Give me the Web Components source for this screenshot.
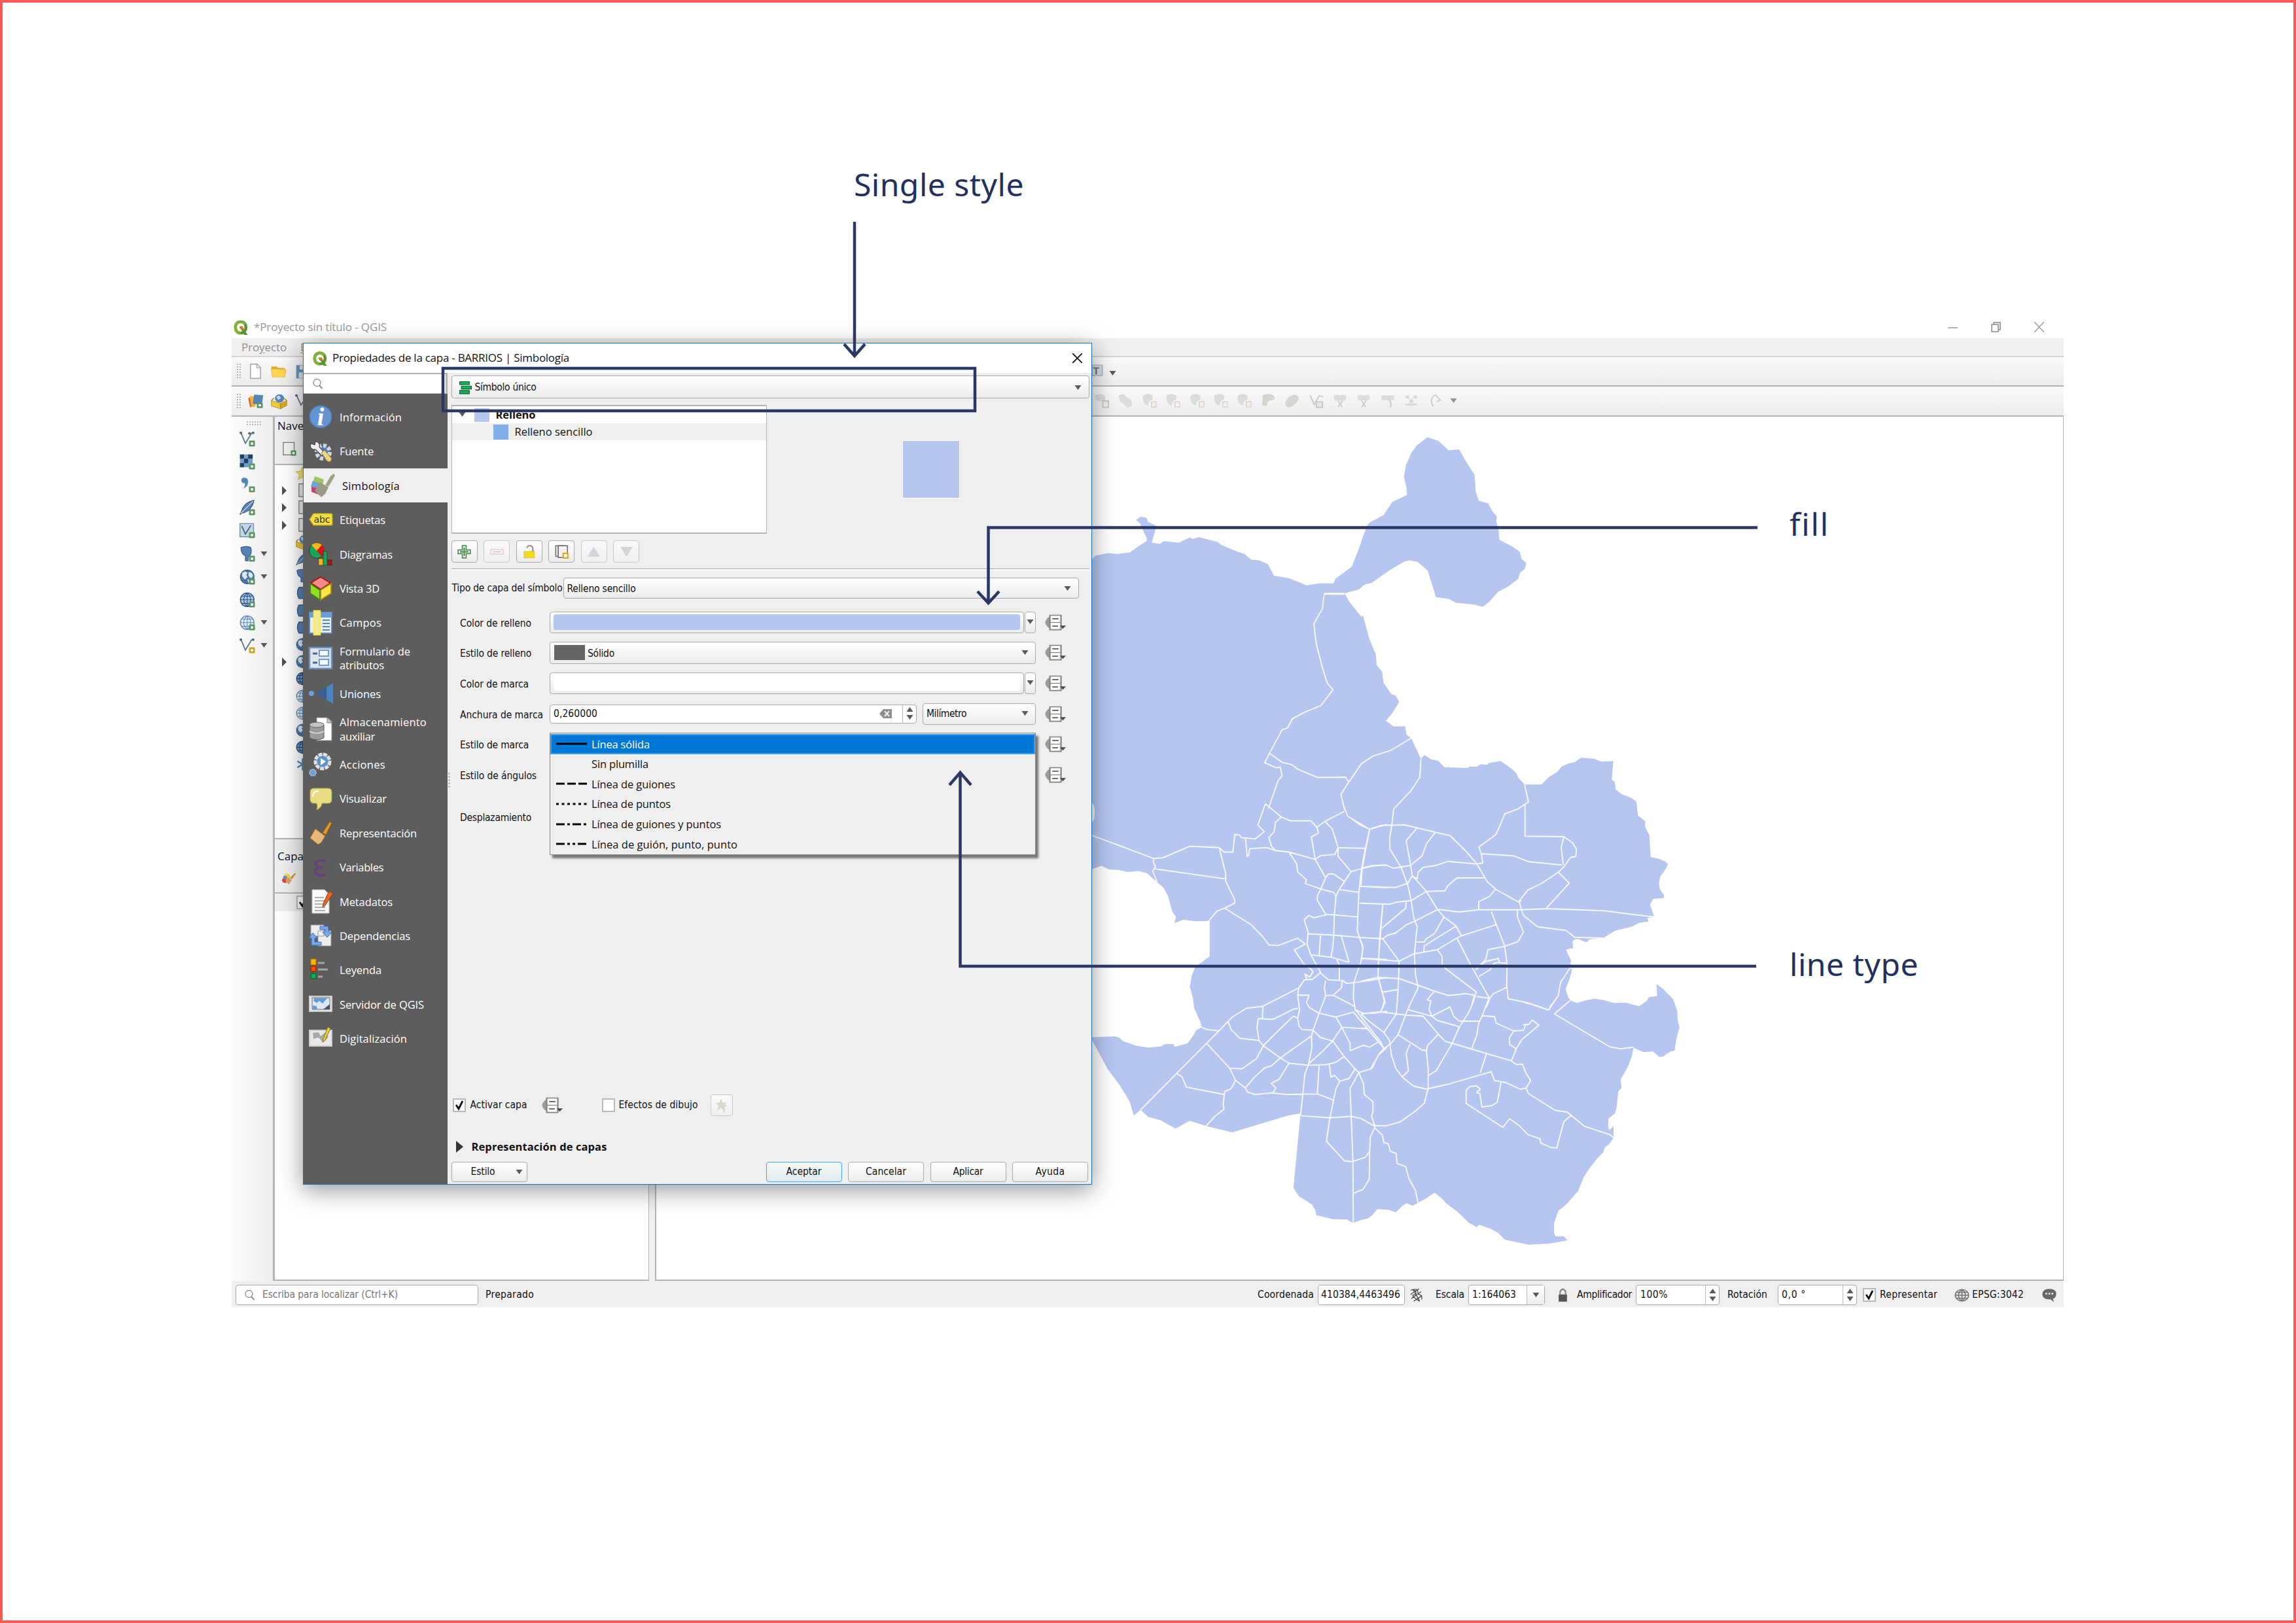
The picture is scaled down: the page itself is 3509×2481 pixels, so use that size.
<!DOCTYPE html>
<html lang="es">
<head>
<meta charset="utf-8">
<title>Propiedades de la capa</title>
<style>
html,body{margin:0;padding:0;background:#fff}
body{width:3509px;height:2481px;overflow:hidden}
</style>
</head>
<body>
<qgis-sheet></qgis-sheet>
<script>
const define = (name, css, html) => customElements.define(name, class extends HTMLElement {
  connectedCallback() {
    if (this.shadowRoot) return;
    const root = this.attachShadow({ mode: 'open' });
    root.innerHTML = `<style>*{box-sizing:border-box}${css}</style>` + (typeof html === 'function' ? html(this) : html);
  }
});

/* Text run; w sets the advance width by spreading letter spacing. */
const FONTS = {
  ui: '"DejaVu Sans Condensed","DejaVu Sans",sans-serif',
  seg: '"Open Sans","Noto Sans",sans-serif',
  note: '"Noto Sans","Open Sans",sans-serif'
};
const ctx = document.createElement('canvas').getContext('2d');
customElements.define('q-text', class extends HTMLElement {
  connectedCallback() {
    if (this.shadowRoot) return;
    const fam = FONTS[this.getAttribute('f') || 'ui'];
    const size = this.getAttribute('s') || (this.getAttribute('f') ? 17 : 15.5);
    const wt = this.hasAttribute('b') ? 700 : 400;
    const w = +this.getAttribute('w');
    const txt = this.textContent;
    ctx.font = `${wt} ${size}px ${fam}`;
    const ls = w ? (w - ctx.measureText(txt).width) / txt.length : 0;
    this.attachShadow({ mode: 'open' }).innerHTML =
      `<style>:host{display:block;flex:none;white-space:nowrap;font:${wt} ${size}px/1.3 ${fam};letter-spacing:${ls.toFixed(3)}px}</style><slot></slot>`;
  }
});

const plus = '<rect x="21" y="21" width="13" height="13" rx="2" fill="#5b9560"/><rect x="25" y="25" width="5" height="5" fill="#fff"/>';
const plusY = plus.replace('#5b9560', '#c9a61c');
const globe = (c, d) => `<circle cx="17" cy="17" r="15" fill="${c}" stroke="${d}" stroke-width="2"/><path d="M2 17h30M17 2v30M5 9h24M5 25h24M17 2c-10 8-10 22 0 30M17 2c10 8 10 22 0 30" stroke="${d}" fill="none" stroke-width="1.6"/>`;
const land = '<path d="M6 8l7-3 5 3-3 5 3 4-6 6-6-7zM20 6l8 3 2 7-5 4-5-5zM17 23l7 1-4 7z" fill="#dbe7f2"/>';
const ICONS = {
  logo: '<path d="M17 1C7 1 1 8 1 18s6 17 16 17c3 0 5-.6 7-1.500l2 2.500h8l-5-7c3-3 4-7 4-11C33 8 27 1 17 1zm0 7c6 0 9 4 9 10 0 2-.4 4-1 5l-5-6h-7l8 10c-1 1-2.500 1-4 1-6 0-9-4-9-10S11 8 17 8z" fill="#589632"/><path d="M17 1C7 1 1 8 1 18s6 17 16 17l-1-7c-5 0-8-4-8-10S11 8 17 8c4 0 6 1 8 4l5-5C27 3 23 1 17 1z" fill="#7fb336"/><path d="M14 15h7l5 8-4 1z" fill="#ee7913"/>',
  search: '<circle cx="15" cy="14" r="11" fill="none" stroke="#8a8a8a" stroke-width="2.600"/><path d="M22 22l9 10" stroke="#8a8a8a" stroke-width="4"/>',
  info: '<circle cx="18" cy="18" r="17" fill="#6495d0" stroke="#4a79b5" stroke-width="1.500"/><text x="18" y="31" font-family="Liberation Serif,serif" font-style="italic" font-weight="700" font-size="38" text-anchor="middle" fill="#fff">i</text>',
  source: '<circle cx="22" cy="19" r="10" fill="#4f80b8" stroke="#d6d6d6" stroke-width="6" stroke-dasharray="5 2.800"/><path d="M3 6l6 2 1-5c5 0 7 4 6 8l8 9-4 5-10-10c-5 1-9-2-7-9z" fill="#eee" stroke="#444" stroke-width="1.200"/><path d="M19 20l5-4 11 13-2 5-5-1z" fill="#ecd581" stroke="#8d7a35"/>',
  symb: '<path d="M9 4l14 5-3 11L6 15z" fill="#9ec45c"/><path d="M6 11l10 4-2 9-11-4z" fill="#6fa3dd"/><path d="M4 20l12 3-1 9-11-4z" fill="#c2476a"/><path d="M17 13l13 8-5 10-6 5-10-10z" fill="#9a9a86"/><path d="M25 18L33 4l5-4 2 3-10 17z" fill="#a3a182"/>',
  abc: '<path d="M1 18l6-9h27q2 0 2 2v14q0 2-2 2H7z" fill="#f3dc3c" stroke="#bda21e" stroke-width="1.200"/><text x="20" y="23" font-family="DejaVu Sans,sans-serif" font-size="14" text-anchor="middle" fill="#333">abc</text>',
  diag: '<circle cx="12" cy="13" r="11.500" fill="#18a558" stroke="#333"/><path d="M12 13L4 4q8-6 16 0z" fill="#fbb516"/><path d="M12 13l8-9q7 9 0 18z" fill="#d31717"/><path d="M15 25h7v10h-7z" fill="#fbb516" stroke="#333" stroke-width=".6"/><path d="M22 14h6v21h-6z" fill="#18a558" stroke="#222" stroke-width=".6"/><path d="M29 27h6v8h-6z" fill="#b31212" stroke="#222" stroke-width=".6"/>',
  cube: '<path d="M18 1l15 9-15 10L3 10z" fill="#f58c8c" stroke="#a51616" stroke-width="2"/><path d="M2 11l15 10v15L2 26z" fill="#8ce01c" stroke="#4a7a10" stroke-width="2"/><path d="M34 11L18 21v15l16-10z" fill="#ffe548" stroke="#a58c14" stroke-width="2"/>',
  fields: '<path d="M1 2h34v32H1z" fill="#e8edf2" stroke="#5c86b8" stroke-width="2"/><path d="M1 2h34v8H1z" fill="#6f9ccf"/><path d="M21 14h11M21 19h11M21 24h11M21 29h11" stroke="#5c86b8" stroke-width="2"/><path d="M8 0h9v36H8z" fill="#f2e9a0" stroke="#f9f04f" stroke-width="2.500"/>',
  form: '<path d="M1 2h34v32H1z" fill="#dfe5ea" stroke="#6f93bd" stroke-width="2.500"/><path d="M16 6h14v9H16zM16 20h14v9H16z" fill="#fff" stroke="#6f9ccf" stroke-width="2"/><path d="M6 11h7M6 25h7" stroke="#47688f" stroke-width="3"/>',
  join: '<path d="M37 2v32L11 18z" fill="#4f83bd"/><path d="M11 18l16-10v20z" fill="#35608f"/><circle cx="4" cy="18" r="4" fill="#6aa0dc"/>',
  aux: '<path d="M12 1h17l6 6v29H12z" fill="#fff" stroke="#8b8b8b"/><path d="M28 1l7 8h-7z" fill="#ccc" stroke="#777"/><path d="M1 12v20q10 6 22 0V12z" fill="#9b9b9b" stroke="#555"/><ellipse cx="12" cy="12" rx="11" ry="4" fill="#c4c4c4" stroke="#666"/><path d="M1 22q11 6 22 0" fill="none" stroke="#ddd" stroke-width="1.500"/>',
  action: '<circle cx="21" cy="14" r="11" fill="#5e92cd" stroke="#e2e2e2" stroke-width="5" stroke-dasharray="6 1.500"/><path d="M18 9l8 5-8 6z" fill="#fff"/><circle cx="6" cy="31" r="5" fill="#6aa0dc" stroke="#d0d0d0" stroke-width="1.500" stroke-dasharray="2 1"/>',
  tip: '<path d="M8 2h21q6 0 6 6v11q0 6-6 6H20q0 6-8 10 2-5 0-10H8q-6 0-6-6V8q0-6 6-6z" fill="#e6dc84" stroke="#b5a941"/><path d="M6 15q0-9 9-9" fill="none" stroke="#fff" stroke-width="2"/>',
  brush: '<path d="M21 18L32 1l3 2-9 18z" fill="#e39a2d" stroke="#9a5f10"/><path d="M10 12l15 11-6 10-5 3L2 26z" fill="#e8b877" stroke="#9e7030"/>',
  eps: '<text x="17" y="32" font-family="DejaVu Sans,sans-serif" font-size="46" text-anchor="middle" fill="#67407a">ε</text>',
  meta: '<path d="M5 0h19l7 7v29H5z" fill="#fafafa" stroke="#bbb"/><path d="M9 12h14M9 17h16M9 22h12M9 27h16M9 32h16" stroke="#999" stroke-width="1.600"/><path d="M31 2l6 4-12 18-4 3 1-6z" fill="#e16a28" stroke="#8f3f12"/>',
  dep: '<path d="M3 2h20v17H3zM14 11h20v23H14z" fill="#eee" stroke="#999"/><path d="M17 4h13v9h5l-7 8-7-8h4V9h-8z" fill="#7da7e8" stroke="#3f6fbb"/><path d="M19 33H4V22H0l6-8 7 8H9v6h10z" fill="#7da7e8" stroke="#3f6fbb"/>',
  legend: '<path d="M3 1h8v9H3z" fill="#ffb400" stroke="#b57400"/><path d="M3 12h8v8H3z" fill="#ff4b00" stroke="#8c1a00"/><path d="M3 23h8v8H3z" fill="#0bb04c" stroke="#04542a"/><path d="M14 7h10M14 17h15M14 28h7" stroke="#a5a5a5" stroke-width="3"/>',
  server: '<path d="M1 6h34v23H1z" fill="#eee" stroke="#ccc" stroke-width="2"/><path d="M5 8h27v18H5z" fill="#dce9f5" stroke="#666"/><path d="M8 9h20l-7 8-5-4-4 3-5-3zM6 20l6 1 1 5H6z" fill="#649ad4"/><path d="M32 18v8H22z" fill="#555"/>',
  digit: '<path d="M1 6h34v24H1z" fill="#e9e9e9" stroke="#ccc" stroke-width="2"/><path d="M6 10l9-1 3 6 7-6 5 7-8 9-7-8-8 2z" fill="#a9a9a9"/><path d="M29 1l4 2-8 18-4 3 1-5z" fill="#e3d13c" stroke="#877a1a"/>',
  doc: '<path d="M6 1h16l8 8v26H6z" fill="#fff" stroke="#aaa" stroke-width="2.500"/><path d="M21 1v9h9" fill="#eee" stroke="#aaa" stroke-width="2"/>',
  folder: '<path d="M1 4h12l4 4h15v6H1z" fill="#e0a92c"/><path d="M1 11h26l8 2-3 20H3z" fill="#ffd54f" stroke="#d9a52a"/>',
  save: '<path d="M1 2h34v33H1z" fill="#6b93bf"/><path d="M9 3h18v10H9zM7 20h22v14H7z" fill="#dde6ef"/>',
  layers: '<path d="M2 10l14-3-1 20-9 5z" fill="#e05a2a"/><path d="M5 6l14 0-1 24-9 2z" fill="#f0b23a"/><path d="M15 2l20 1-3 23-20-2z" fill="#5683b5"/>' + plus,
  pack: '<circle cx="19" cy="11" r="10" fill="#5683b5"/><path d="M12 7l6-3 4 6-6 5z" fill="#c8dcf0"/><path d="M1 16l20 7v13L1 29z" fill="#f0c83a" stroke="#9a7a14"/><path d="M21 23l14-7v12l-14 8z" fill="#d9a91e" stroke="#9a7a14"/><path d="M1 16l6-6M35 16l-6-5" stroke="#9a7a14" stroke-width="2"/>',
  vec: '<path d="M3 3l10 24L27 4" fill="none" stroke="#5d7386" stroke-width="2.500"/><circle cx="3" cy="4" r="3" fill="#4d6a85"/><circle cx="22" cy="5" r="3" fill="#4d6a85"/><circle cx="30" cy="4" r="3" fill="#4d6a85"/>' + plus,
  vecy: '<path d="M3 3l10 24L27 4" fill="none" stroke="#5d7386" stroke-width="2.500"/><circle cx="3" cy="4" r="3" fill="#4d6a85"/><circle cx="30" cy="4" r="3" fill="#4d6a85"/>' + plusY,
  raster: '<path d="M1 1h28v28H1z" fill="#6f9ccf"/><path d="M1 1h9v9H1zM19 1h10v9H19zM10 10h9v10h-9zM1 20h9v9H1z" fill="#23405e"/>' + plus,
  comma: '<path d="M8 2q11-2 11 9 0 10-11 15 5-6 4-12-8 0-8-6 0-5 4-6z" fill="#5683b5"/>' + plus,
  feather: '<path d="M32 1Q10 6 5 24L1 33l3-3q18-4 22-14 4-5 6-15z" fill="#5683b5" stroke="#2f4d6b" stroke-width="1.500"/><path d="M30 3L3 30" stroke="#dfe9f3" stroke-width="1.500"/>' + plus,
  vbox: '<path d="M1 2h30v29H1z" fill="#c4d4e4" stroke="#6f8ca8" stroke-width="2"/><path d="M5 7l8 18L25 6" fill="none" stroke="#44607a" stroke-width="2.500"/>' + plus,
  eleph: '<path d="M3 3q12-5 22 0 3 10-2 18l-4 2v9h-6V20q-9 0-10-17z" fill="#5683b5" stroke="#2f5078" stroke-width="1.500"/>' + plus,
  globe1: globe('#5683b5', '#3a6490') + land + plus,
  globe2: globe('#a9c8e8', '#2f5078') + plus,
  globe3: globe('#e4eef8', '#6089b3') + plus,
  g1: globe('#5683b5', '#3a6490') + land, g2: globe('#6f9ccf', '#23405e'), g3: globe('#e4eef8', '#6089b3'),
  star: '<path d="M17 1l5 11 12 1-9 8 3 12-11-6-11 6 3-12-9-8 12-1z" fill="#f4e36b" stroke="#c9a61c"/>',
  drive: '<path d="M8 1h28v32H8z" fill="#eee" stroke="#777" stroke-width="2"/>',
  db: '<path d="M8 3h26v28H8q-8-14 0-28z" fill="#5683b5" stroke="#2f5078" stroke-width="2"/>',
  snow: '<path d="M17 2v30M4 9l26 16M30 9L4 25" stroke="#5683b5" stroke-width="4"/>',
  nlayer: '<path d="M3 2h26v30H3z" fill="#f2f2ee" stroke="#777" stroke-width="2"/>' + plus,
  style: '<circle cx="12" cy="12" r="9" fill="#f2d64b"/><circle cx="8" cy="22" r="8" fill="#e0443c"/><circle cx="8" cy="14" r="5" fill="#5a92d6"/><path d="M19 16L32 1l3 2-10 16z" fill="#d99a3d"/><path d="M12 13l13 9-8 12-8-9z" fill="#d9a565"/>',
  single: '<path d="M1 1h28v8H1zM6 13h29v8H6zM1 25h28v9H1z" fill="#0eb657" stroke="#0a5c30" stroke-width="2"/>',
  add: '<path d="M13 2h10v11h11v10H23v11H13V23H2V13h11z" fill="#fff" stroke="#4d8d53" stroke-width="3"/><path d="M18 7v22M7 18h22" stroke="#5b9560" stroke-width="4"/>',
  minus: '<path d="M2 12h32v12H2z" fill="#fff" stroke="#e0cdd0" stroke-width="2.500"/><path d="M7 18h22" stroke="#e4cdd0" stroke-width="4"/>',
  lock: '<path d="M5 17h27v17H5z" fill="#f2dc1e" stroke="#c5ab16"/><path d="M12 8q2-6 9-6 7 1 7 8v7" fill="none" stroke="#9b9b9b" stroke-width="4"/>',
  dup: '<path d="M2 2h22v28H2z" fill="#ddd" stroke="#777" stroke-width="2.500"/><path d="M9 2h24v31H9z" fill="#f1f1f1" stroke="#666" stroke-width="2.500"/><path d="M22 22h12v12H22z" fill="#fff" stroke="#d4b02a" stroke-width="4"/>',
  up: '<path d="M18 3l15 30H3z" fill="#d3d6d9" stroke="#c2c6ca"/>',
  down: '<path d="M18 33L33 3H3z" fill="#d3d6d9" stroke="#c2c6ca"/>',
  fx: '<path d="M17 2l4 10h11l-9 7 4 13-10-8-10 8 4-13-9-7h11z" fill="#dbd8ca"/><path d="M25 34V22q0-4 6-3" fill="none" stroke="#cfcfcf" stroke-width="3"/>',
  dd: '<path d="M8 5v26Q1 26 .5 18 1 10 8 5z" fill="#9c9c9c"/><path d="M8 2h18v32H8z" fill="#f9f9f7" stroke="#83837b" stroke-width="2.200"/><path d="M8 18h18" stroke="#83837b" stroke-width="1.600"/><path d="M12 10h10M12 26h9" stroke="#5c5c5c" stroke-width="2.600"/><path d="M24 25h10l-5 7z" fill="#4c4c4c"/>',
  tbox: '<path d="M0 2h20v26H0z" fill="#d5e0e4" stroke="#a9b4ba" stroke-width="2"/><path d="M2 9h12M8 9v16" stroke="#777" stroke-width="3"/>',
  plug: '<path d="M4 6q8-6 12 2t-4 9 4 9 10 6M14 3q8-1 8 6t6 8 4 12M3 16l22-14M5 26L31 9M11 33l22-14M9 3l18 30" fill="none" stroke="#3d3d3d" stroke-width="2"/>',
  padlock: '<path d="M6 16h24v18H6z" fill="#555"/><path d="M10 17V9q8-12 16 0v8" fill="none" stroke="#888" stroke-width="4"/>',
  world: '<circle cx="18" cy="18" r="16" fill="#e6e6e6" stroke="#777" stroke-width="2.500"/><path d="M2 18h32M18 2v32M5 10h26M5 26h26M18 2C7 10 7 26 18 34M18 2c11 8 11 24 0 32" fill="none" stroke="#777" stroke-width="2.500"/>',
  bubble: '<path d="M18 2q16 0 16 13-1 10-8 12l3 8-9-7Q2 29 2 15 3 2 18 2z" fill="#666"/><path d="M9 14h4M16 14h4M23 14h4" stroke="#eee" stroke-width="4"/>',
  d0: '<path d="M3 5q14-8 22 1v11H14q-12 2-11-12z" fill="#dadedb" stroke="#cdd1ce"/><path d="M20 18h13v16H20z" fill="#eceee8" stroke="#c6cac2" stroke-width="3"/>',
  d1: '<path d="M4 4q10-6 15 4 16 6 13 22-12 8-18-6Q0 16 4 4z" fill="#dadfdd" stroke="#cdd1ce"/>',
  d2: '<path d="M3 5q14-8 22 1l-2 9q-8 0-9 14-12-4-11-24z" fill="#dadeda" stroke="#cdd1ce"/><path d="M22 20h11v13H22z" fill="#f3efec" stroke="#d5cfc6" stroke-width="2"/>',
  d3: '<path d="M5 4q14-6 24 1 6 12-8 10-6 2-8 14-8 2-9-4z" fill="#d3d7cf" stroke="#c6cac2"/>',
  d4: '<path d="M24 3q12 4 6 14-8 14-20 16-10-2-6-14Q10 4 24 3z" fill="#d3d7cf" stroke="#c6cac2"/>',
  d5: '<path d="M3 3l10 24L24 5l9 2" fill="none" stroke="#c6cfcd" stroke-width="3"/><path d="M18 20h14v14H18z" fill="#e6e8e6" stroke="#bbb" stroke-width="2"/>',
  d6: '<path d="M4 4q7-3 14 0 7-3 14 0v10q-7 6-14 2-7 4-14-2z" fill="#d9dddb"/><path d="M14 18l9 15M23 18l-9 15" stroke="#cdc6c8" stroke-width="2.500"/>',
  d7: '<path d="M3 4h30v12H3z" fill="#d9dddb"/><path d="M20 14q8 8 4 20" fill="none" stroke="#ccc" stroke-width="3"/>',
  d8: '<path d="M5 4h8v8H5zM23 4h8v8h-8zM14 14h8v8h-8zM5 24h26v5H5z" fill="#d5d8d5"/>',
  d9: '<path d="M20 2q-16 8-6 30M20 4l10 12-8 4" fill="none" stroke="#ccc" stroke-width="3"/>'
};
customElements.define('q-icon', class extends HTMLElement {
  connectedCallback() {
    if (this.shadowRoot) return;
    const w = this.getAttribute('w') || 24, h = this.getAttribute('h') || w;
    this.attachShadow({ mode: 'open' }).innerHTML =
      `<style>:host{display:block;flex:none;width:${w}px;height:${h}px}svg{display:block;overflow:visible}</style>
       <svg width="${w}" height="${h}" viewBox="0 0 36 36" preserveAspectRatio="none">${ICONS[this.getAttribute('n')] || ''}</svg>`;
  }
});
define('q-arrow', ':host{display:block;flex:none;width:11px;height:8px}svg{display:block}',
  el => el.hasAttribute('right')
    ? '<svg width="10" height="14"><path d="M1 0l7 7-7 7z" fill="#505050"/></svg>'
    : `<svg width="11" height="8"><path d="${el.hasAttribute('up') ? 'M.5 7h10L5.500 0z' : 'M.5 0h10L5.500 7z'}" fill="#5a5a5a"/></svg>`);

/* Framed control: combo, button or field */
define('q-box', `:host{display:flex;flex:none;align-items:center;border:1.500px solid #aaa;border-radius:4px;background:linear-gradient(#fff,#ececec)}
 :host([field]){background:#fff}
 :host([def]){border-color:#3fa2f2;background:linear-gradient(#f7fafc,#e2eaf0)}
 :host([off]){border-color:#c9c9c9;background:linear-gradient(#fafafa,#efefef)}
 :host([mid]){justify-content:center}`, '<slot></slot>');
define('q-check', ':host{display:block;flex:none;width:20px;height:21px;border:2px solid #b8b8b8;background:#fff}svg{display:block}',
  el => el.hasAttribute('on') ? '<svg width="16" height="17"><path d="M3 8l4 6 6-12" fill="none" stroke="#111" stroke-width="2.800"/></svg>' : '');
define('q-spin', ':host{display:flex;flex-direction:column;gap:4px;justify-content:center;align-items:center;width:21px;height:100%;border-left:1px solid #bbb;margin-left:auto}',
  '<q-arrow up></q-arrow><q-arrow></q-arrow>');
define('q-grip', ':host{display:block;flex:none;width:7px;height:25px;background:radial-gradient(#b5b5b5 1px,transparent 1.300px) 0 0/4px 4px}', '');

/* District map. Each survey sheet has its own origin and scale. */
const SHEETS = { a: [1660, 640, 760 / 1568, 660 / 1568], b: [1660, 1240, 1 / 3, 700 / 1568], c: [2080, 1140, 1 / 3, 1 / 3], d: [2080, 1500, 1 / 3, 1 / 3] };
const MX = 1003, MY = 637;
const pts = (k, s) => s.trim().split(/\s+/).map(p => {
  const [x, y] = p.split(',').map(Number), [ox, oy, sx, sy] = SHEETS[k];
  return (ox + x * sx - MX).toFixed(1) + ' ' + (oy + y * sy - MY).toFixed(1);
}).join('L');
const OUTLINE = [
['a','18,510 30,497 70,488 95,491 138,486 165,463 192,443 190,432 175,395 170,380 157,368 172,356 190,360 195,374 222,390 207,450 233,455 245,445 292,450 327,431 337,437 355,430 415,448 425,458 470,480 500,492 520,512 545,514 573,528 592,570 640,580 695,605 735,598 780,598 785,582 838,537 862,465 872,430 885,390 893,378 938,350 965,303 1012,277 1010,250 1002,210 1008,170 1025,125 1043,97 1076,68 1110,80 1143,115 1176,112 1200,160 1225,205 1228,265 1238,298 1268,308 1280,335 1295,355 1293,375 1300,400 1303,440 1345,465 1368,485 1372,508 1388,525 1383,545 1368,560 1362,582 1330,610 1300,628 1268,668 1250,683 1220,675 1165,668 1145,655 1103,648 1090,600 1077,552 1045,520 1020,514 1005,518 960,548 900,596 878,602 860,620 815,634 830,665 868,720 873,715 893,800 913,855 916,895 933,918 938,960 962,1000 975,1005 987,1028 965,1070 945,1097 970,1118 1006,1117 1010,1148 1025,1160 1045,1210'],
['c','275,60 290,43 322,62 355,70 382,98 487,102 500,95 530,96 550,85 575,88 590,78 640,70 690,105 712,125 720,145 750,178 828,178 860,145 900,120 920,95 950,82 980,75 1008,55 1070,60 1100,73 1157,70 1150,155 1163,165 1168,200 1195,222 1235,237 1262,255 1270,320 1303,345 1303,372 1322,410 1328,510 1370,520 1395,530 1407,542 1400,560 1372,600 1366,630 1370,658 1390,685 1388,698 1340,702 1325,727 1345,785 1313,790 1318,806 1275,812 1240,830 1165,848 1110,882 1050,887 1033,902 1000,888 985,887 970,895 973,928 940,935 963,985 958,1020 968,1025 958,1065 938,1115 950,1155 962,1167'],
['d','960,87 990,100 1030,88 1070,80 1115,87 1160,100 1215,98 1275,115 1310,90 1320,73 1358,68 1355,13 1385,35 1430,80 1450,135 1452,180 1460,210 1445,270 1438,318 1420,322 1385,345 1368,347 1338,322 1295,325 1250,305 1240,350 1220,400 1190,450 1195,490 1180,505 1172,580 1165,605 1135,630 1133,660 1137,683 1158,665 1158,718 1140,745 1118,762 1110,785 1085,810 1050,855 1022,897 995,962 940,1025 905,1052 885,1110 885,1155 893,1170 930,1170 947,1188 870,1202 768,1208 660,1185 630,1155 600,1138 543,1117 530,1127 495,1108 440,1055 390,1018 370,995 337,970 300,995 237,1030 210,1018 190,1030 160,1060 125,1048 75,1045 55,1070 30,1088 0,1095'],
['b','1223,1410 1195,1398 1130,1397 1055,1383 1050,1365 1035,1347 975,1318 950,1290 983,1035 925,1042 670,1100 550,1078 475,1060 410,1087 340,1058 285,1047 250,1023 218,1042 200,995 155,940 100,885 28,785 0,775 130,771 150,775 170,788 230,803 285,810 345,805 360,798 400,797 405,807 465,795 485,775 505,750 530,740 523,720 495,675 490,640 475,600 485,560 500,535 525,520 566,498 566,372 555,376 500,377 445,372 405,383 412,362 395,345 375,290 355,262 325,243 280,213 240,205 190,208 150,201 105,200 70,187 28,198 0,198']
];
const LINES = {
a: `750,640 745,690 718,745 725,815 745,905 760,960 778,985 740,1042 690,1065 650,1090 635,1123 618,1130 578,1215 563,1250 600,1268 612,1265 618,1297 605,1315 575,1415
578,1215 618,1248 650,1257 665,1272 730,1303 818,1302 828,1320
1025,1160 960,1205 905,1225 868,1253 828,1320 803,1365 815,1420`,
b: `28,83 310,162 350,160 475,120 610,125 632,140 672,140 682,80 705,82 710,90 775,95 817,70 787,48 822,-25
730,90 738,155 745,152 750,128 830,125 870,135 930,140 1050,165
1050,165 1075,152 1140,148 1155,125 1280,127
822,-25 895,20 868,38 862,70 838,90 850,120 868,135
895,20 935,33 1030,33 1058,55 1095,35 1185,0
1183,-14 1200,18 1300,62 1380,45
1058,55 1065,75 1033,88 1050,165 1098,228 1075,268 1060,290 1060,305 1100,355
1095,35 1128,60 1155,125 1155,155 1215,207
1300,62 1280,127 1262,200 1250,280 1243,410 1268,465 1262,510 1228,585 1225,640 1235,685
610,125 640,215 640,240 682,305 680,315 635,332 600,342 566,372
310,162 308,175 318,190 305,205 325,243
310,197 640,232
635,332 755,388 810,430 838,458 880,460 970,435 1005,455
930,140 965,180 970,208 1010,235 1005,248 1075,266 1135,278 1145,292 1138,355 1135,430 1130,470 1122,500
1098,228 1110,215 1135,215 1183,240
1145,292 1160,268 1215,207 1262,197 1320,187 1380,185
1160,268 1250,278
1100,355 1045,365 1020,357 1000,372 1018,415 1013,455 1030,492 1075,552 1040,575 1000,578 975,605
1100,353 1243,362
1018,420 1145,425 1250,432 1365,437
1075,422 1068,495
1030,492 1122,500 1205,517
1170,428 1205,517
1262,503 1380,508
1255,257 1380,262
1253,315 1380,318
1360,318 1345,440 1338,570 1370,655 1350,688
1005,455 955,475 1000,525 1030,540 1040,550 1025,568 1003,558 1012,575
975,605 810,668 735,675 670,705 650,720 605,755 415,898 250,1023
530,740 555,748 605,752
975,605 970,630 978,680 970,710 975,735 990,748 1040,750
970,630 1022,630 1010,655 1022,672 1068,692 1040,750 1033,770 1035,810 1020,865 1003,900 983,1040
1075,555 1112,578 1175,580 1195,590 1300,580 1380,570
1150,508 1162,530 1160,578
1175,580 1170,605 1133,630 1098,632 1092,605 1098,580
1133,630 1235,670
1098,632 1068,692 1145,705 1225,688
1235,680 1270,692 1320,692 1380,685
1235,680 1350,790 1365,812
1225,688 1340,790
1145,705 1172,740 1285,745
1172,740 1130,787 1080,825 1020,865
1172,740 1210,795 1210,820 1270,802 1300,808 1340,790
1040,750 1075,775 1130,787 1183,840 1230,880 1250,895 1305,882 1340,835 1380,808
1183,840 1145,860 1100,868 1015,870 930,863 890,845 812,803
810,668 808,710
970,675 950,678 905,695 855,713 790,710 783,740 792,785 812,803
970,708 950,702 870,760 812,803 780,848 715,882 658,880 555,797
650,720 665,748 705,778 792,785
1035,768 890,845 850,872 820,878 770,912 730,948
658,880 685,922 730,948 740,962 775,970 850,965 920,970 1060,968 1135,990
685,922 665,950 635,960 628,1005 632,1020 590,1045 550,1078
415,898 440,910 460,945 632,970
930,863 885,918 848,932 870,948 855,965
1068,872 1060,968
1115,868 1122,910 1140,905 1163,925 1205,915 1235,880
1163,925 1145,950 1115,1060 1102,1130 1185,1198 1222,1200 1280,1185 1300,1165
1250,895 1210,950 1215,1040 1223,1200 1225,1410
985,1043 1120,1050 1215,1045 1260,1052 1325,1080
1250,895 1272,935 1275,970 1315,995 1315,1030 1308,1045 1325,1080 1303,1115 1300,1165 1298,1260 1270,1295 1227,1308`,
c: `275,60 270,145 230,205 150,290 142,360 132,420 133,475 185,560 215,640 230,710 242,790 258,830 250,900 245,960 250,1050 262,1110 218,1200
-42,335 0,365 40,382 95,365 200,363 410,413 480,482 530,540 580,625 620,660 720,715 735,712
40,382 5,565 0,640
255,380 207,435 228,550 235,595 300,668 350,750
340,398 300,450 280,505 228,548 150,562 115,547 50,550 0,562
0,645 160,650 215,630 235,597 258,610 262,580 285,558 340,550 400,530 530,542 558,538 552,495
0,722 130,727 165,717 230,710 300,668 385,665 400,640 440,606 565,606
750,178 768,258 752,268 720,290 660,312 640,360 618,408 540,465 552,495 700,505 770,532 920,547
752,268 752,415 930,417 970,445 988,475 985,508 960,512 935,550 905,580 830,630 765,662 725,712 735,750 745,778 810,830 940,847 980,878 1110,882
930,420 918,465 928,548
905,580 955,630 850,745
350,750 450,762 540,752 735,752 850,747 1120,757 1200,768 1345,785
540,752 540,715 590,690 615,660
350,750 380,785 435,825 460,872 620,820 598,760
350,752 245,805 210,820 160,858 120,870 100,885 0,880
380,785 338,860 300,885 290,900 255,900
435,828 375,865 290,918 288,945
100,727 80,985 78,1060 108,1165 100,1200
95,838 205,745 207,718
100,885 175,988 172,1080 165,1200
0,975 175,988 240,955 350,935 440,882 460,872
350,935 372,965 373,1010 530,1130 520,1145 505,1200
440,882 500,1000 590,1160 575,1200
620,820 658,915 670,1000 668,1100 675,1160 750,1175 830,1200
718,755 717,785 745,855 720,898 658,920 582,935 572,980 525,1028
525,1028 570,990 630,975 635,995 665,997
540,1058 590,1028 610,998 635,992
590,1160 605,1138 668,1108
958,1020 915,1085 905,1145 865,1200
0,1080 78,1062 175,1068 262,1098
98,1130 168,1118
0,895 10,925 0,985`,
d: `100,60 108,97 90,140
170,30 162,150 105,235
218,120 170,245 135,288 105,308 80,338 50,400 0,415
0,150 90,140 205,155 285,160 355,243 385,275 420,285 690,365 712,382 740,380 753,415 778,455 757,490 768,515 890,592 945,600 1025,665 1140,703 1158,718
0,150 40,185 105,235 130,270 140,340 160,400 190,440 240,480 300,495 400,472 597,415 612,455 665,465 730,495 757,490
0,180 105,308
0,215 28,217
262,18 335,45 400,65 480,57 525,65
530,70 590,78
335,48 303,85 320,90 312,130 325,160 350,180 440,205 450,212
215,130 325,160 408,118 425,160 450,183 545,182
505,120 490,150 450,212 418,285 345,410 310,432
588,75 555,160 540,190 530,250 508,308
750,98 780,105 860,132 905,65
525,65 505,120
960,87 887,150 1140,300 1190,310 1250,302
555,158 612,162 620,192 700,228 745,225 755,200 745,200 770,197 785,178 815,202 735,270 712,310 690,365
700,228 680,260 682,290 712,310
170,245 280,315 300,318 305,295 355,243
300,318 308,400 308,490 290,560 250,595 180,645 120,662 60,662 0,630
225,288 207,330 218,410 190,438
575,333 547,420
642,463 625,555 600,570 555,577 545,515 530,510 547,495 530,480 500,482 482,500 482,560 650,670 682,630 725,662 765,703 820,722 825,742 870,762 898,765 920,680 930,645 962,615
65,675 98,705 105,740 125,745 135,780 162,790 165,835 205,850 220,905 250,960 262,1018`
};
define('map-canvas', ':host{display:block;flex:none;width:2153px;height:1321px;background:#fff;border:1px solid #b4b4b4;border-width:0 1px 2px 2px;overflow:hidden}svg{display:block}', () => {
  const fill = 'M' + OUTLINE.map(([k, s]) => pts(k, s)).join('L') + 'Z';
  const net = Object.entries(LINES).map(([k, s]) => s.split('\n').map(l => 'M' + pts(k, l)).join('')).join('');
  return `<svg width="2153" height="1321"><path d="${fill}" fill="#b7c6f1"/><path d="${net}" fill="none" stroke="#fff" stroke-opacity=".88" stroke-width="1.900" stroke-linejoin="round"/>
  <path d="M${pts('a', '750,636 815,636')}" stroke="#fff" stroke-width="3"/><ellipse cx="666" cy="605" rx="4" ry="14" fill="#fff"/></svg>`;
});

/* Main window parts */
define('title-bar', ':host{display:flex;flex:none;height:37px;align-items:center;padding:3px 30px 0 3px;color:#999;background:#fff}.c{margin-left:auto;display:flex;gap:51px;align-items:center}svg{display:block}',
  `<q-icon n="logo" w="23" h="23"></q-icon><q-text f="seg" w="203" style="margin-left:8px">*Proyecto sin título - QGIS</q-text>
  <div class="c"><svg width="15" height="17"><path d="M0 9h15" stroke="#999" stroke-width="1.500"/></svg>
  <svg width="15" height="16"><path d="M1 4h10v11H1zM4 4V1h10v11h-3" fill="none" stroke="#888" stroke-width="1.500"/></svg>
  <svg width="15" height="16"><path d="M0 0l15 16M15 0L0 16" stroke="#999" stroke-width="1.500"/></svg></div>`);
define('menu-bar', ':host{display:flex;flex:none;height:29px;align-items:center;background:#efefef;border-bottom:2px solid #d4d4d4;padding:1px 0 0 15px;gap:21px;color:#8f8f8f}u{text-underline-offset:2px}',
  '<q-text f="seg" w="69">Pro<u>y</u>ecto</q-text><q-text f="seg"><u>E</u></q-text>');
define('tool-bar', ':host{display:flex;flex:none;height:45px;align-items:center;background:linear-gradient(#fafafa,#ececec);border-bottom:2px solid #b4b4b4;padding-left:7px}', '<slot></slot>');
define('tool-strip', `:host{display:flex;flex:none;flex-direction:column;width:63px;background:linear-gradient(90deg,#fdfdfd,#ececec);padding:6px 0 0 12px}
 i{display:block;width:24px;height:7px;background:radial-gradient(#b5b5b5 1px,transparent 1.300px) 0 0/4px 4px;margin:0 0 4px 10px}
 div{display:flex;height:35.100px;align-items:center;gap:7px}`,
  '<i></i>' + [['vec'], ['raster'], ['comma'], ['feather'], ['vbox'], ['eleph', 1], ['globe1', 1], ['globe2'], ['globe3', 1], ['vecy', 1]]
    .map(([n, a]) => `<div><q-icon n="${n}" w="25" h="25"></q-icon>${a ? '<q-arrow></q-arrow>' : ''}</div>`).join(''));
define('dock-column', `:host{display:flex;flex:none;flex-direction:column;width:575px;background:#efefef;border:2px solid #b4b4b4;border-width:0 1px 2px 3px;color:#111}
 .h{height:26px;padding:3px 0 0 4px}.t{display:flex;align-items:center;padding-left:11px;height:46px}
 .box{border-top:2px solid #b4b4b4;background:#fff}.nav{height:572px}.r{display:flex;align-items:center;height:26.200px;padding-left:10px}
 .r q-arrow{height:14px}.r b{width:11px}.r q-icon{margin-left:11px}
 .lay{flex:1}.sel{height:27px;background:#efefef;display:flex;align-items:center;padding-left:33px}`,
  `<div class="h"><q-text f="seg">Nave</q-text></div><div class="t"><q-icon n="nlayer" w="23" h="23"></q-icon></div>
  <div class="box nav">${['star', '>drive', '>drive', '>drive', 'pack', 'feather', 'eleph', 'db', 'db', 'db', 'g1', '>g1', 'g2', 'g3', 'g3', 'g1', 'g2', 'snow']
    .map(s => `<div class="r">${s[0] === '>' ? '<q-arrow right></q-arrow>' : '<b></b>'}<q-icon n="${s.replace('>', '')}" w="22" h="22"></q-icon></div>`).join('')}</div>
  <div class="box" style="background:none;padding-top:12px"><div class="h" style="height:27px"><q-text f="seg">Capa</q-text></div><div class="t" style="height:42px"><q-icon n="style" w="22" h="19"></q-icon></div></div>
  <div class="box lay"><div class="sel"><q-check on></q-check></div></div>`);
define('status-bar', ':host{display:flex;flex:none;height:40px;align-items:center;background:#efefef;padding:3px 0 0 6px;color:#111}q-box{height:31px;align-self:center}',
  `<q-box field style="width:371px;padding-left:12px;color:#777;gap:10px"><q-icon n="search" w="18" h="18"></q-icon><q-text w="207">Escriba para localizar (Ctrl+K)</q-text></q-box>
  <q-text w="74" style="margin-left:11px">Preparado</q-text>
  <q-text w="86" style="margin-left:1106px">Coordenada</q-text>
  <q-box field style="width:133px;margin-left:6px;padding-left:4px"><q-text w="121">410384,4463496</q-text></q-box>
  <q-icon n="plug" w="21" h="22" style="margin-left:7px"></q-icon>
  <q-text w="44" style="margin-left:19px">Escala</q-text>
  <q-box field style="width:117px;margin-left:6px;padding-left:5px"><q-text w="67">1:164063</q-text><span style="margin-left:auto;border-left:1px solid #bbb;width:27px;height:100%;display:flex;align-items:center;justify-content:center;background:linear-gradient(#fff,#ececec)"><q-arrow></q-arrow></span></q-box>
  <q-icon n="padlock" w="19" h="22" style="margin-left:18px"></q-icon>
  <q-text w="84" style="margin-left:12px">Amplificador</q-text>
  <q-box field style="width:128px;margin-left:6px;padding-left:6px"><q-text w="42">100%</q-text><q-spin></q-spin></q-box>
  <q-text w="61" style="margin-left:12px">Rotación</q-text>
  <q-box field style="width:121px;margin-left:16px;padding-left:5px"><q-text w="37">0,0 °</q-text><q-spin></q-spin></q-box>
  <q-check on style="margin-left:9px"></q-check><q-text w="88" style="margin-left:6px">Representar</q-text>
  <q-icon n="world" w="23" h="20" style="margin-left:26px"></q-icon><q-text w="79" style="margin-left:4px">EPSG:3042</q-text>
  <q-icon n="bubble" w="24" h="22" style="margin-left:27px"></q-icon>`);

/* Dialog sidebar */
define('side-item', `:host{display:flex;flex:none;height:52.400px;align-items:center;padding-left:8px;gap:11px;color:#fff}
 :host([tall]){height:56px}:host([on]){background:#efefef;color:#111;gap:15px}div{display:flex;flex-direction:column;padding-top:1px}`,
  el => `<q-icon n="${el.getAttribute('n')}" w="36" h="36"></q-icon><div><slot></slot></div>`);
const SIDE = [['info', ['Información', 95]], ['source', ['Fuente', 52]], ['symb', ['Simbología', 88]], ['abc', ['Etiquetas', 70]], ['diag', ['Diagramas', 81]], ['cube', ['Vista 3D', 61]], ['fields', ['Campos', 64]],
 ['form', ['Formulario de', 108], ['atributos', 68]], ['join', ['Uniones', 63]], ['aux', ['Almacenamiento', 133], ['auxiliar', 54]], ['action', ['Acciones', 70]], ['tip', ['Visualizar', 72]], ['brush', ['Representación', 118]],
 ['eps', ['Variables', 67]], ['meta', ['Metadatos', 81]], ['dep', ['Dependencias', 108]], ['legend', ['Leyenda', 64]], ['server', ['Servidor de QGIS', 129]], ['digit', ['Digitalización', 103]]];
define('side-bar', `:host{display:flex;flex:none;flex-direction:column;width:220px;background:#5d5d5d}
 .s{height:32px;flex:none;background:#fff;border:2px solid #b4b4b4;border-width:2px 3px 1px 0;margin-bottom:9px;padding:6px 13px}`,
  `<div class="s"><q-icon n="search" w="18" h="18"></q-icon></div>` + SIDE.map(([n, ...t]) =>
    `<side-item n="${n}"${t.length > 1 ? ' tall' : ''}${n === 'symb' ? ' on' : ''}>${t.map(([s, w]) => `<q-text f="seg" s="16.500" w="${w}">${s}</q-text>`).join('')}</side-item>`).join(''));

/* One labelled property line with its data-override button */
define('prop-row', ':host{display:flex;flex:none;height:46.600px;align-items:center;padding-left:13.500px}.l{width:137px;flex:none;padding-top:3px}.c{width:743px;display:flex;align-items:center}',
  el => `<div class="l"><q-text w="${el.getAttribute('w')}">${el.getAttribute('label')}</q-text></div><div class="c"><slot></slot></div>${el.hasAttribute('bare') ? '' : '<q-icon n="dd" w="34" h="25" style="margin-left:14px"></q-icon>'}`);
define('color-pick', ':host{display:flex;gap:1px;width:743px}q-box{height:33px}i{display:block;flex:1;height:24px;border-radius:4px;background:var(--c)}',
  '<q-box style="width:725px;padding:0 5px"><i></i></q-box><q-box mid style="width:17px"><q-arrow></q-arrow></q-box>');

const DASH = ['', null, '13 4', '4 4.500', '13 4 4 4', '13 4 4 4 4 4'];
define('pen-menu', `:host{display:block;position:absolute;width:743px;height:187px;background:#efefef;border:1.500px solid #888;box-shadow:4px 5px 3px rgba(0,0,0,.5);color:#111;padding-top:0}
 div{display:flex;height:30.600px;align-items:center;padding-left:9px;gap:7px}div.on{background:#0078d7;color:#fff;border:2px solid #3b9cf0;padding-left:7px;margin-top:1px}svg{display:block}`,
  [['Línea sólida', 89], ['Sin plumilla', 87], ['Línea de guiones', 128], ['Línea de puntos', 121], ['Línea de guiones y puntos', 198], ['Línea de guión, punto, punto', 223]].map(([t, w], i) =>
    `<div class="${i ? '' : 'on'}"><svg width="47" height="6">${DASH[i] === null ? '' : `<path d="M0 3h47" stroke="#000" stroke-width="3" stroke-dasharray="${DASH[i]}"/>`}</svg><q-text f="seg" s="16.500" w="${w}">${t}</q-text></div>`).join(''));

define('layer-dialog', `:host{display:flex;flex-direction:column;position:absolute;width:1206px;height:1287px;background:#efefef;border:1.500px solid #1a70c0;box-shadow:0 8px 34px rgba(0,0,0,.42);color:#111}
 .t{display:flex;flex:none;height:45px;background:#fff;align-items:center;padding:0 14px 0 14px}.t svg{margin-left:auto}
 .m{display:flex;flex:1}.p{flex:1;position:relative;display:flex;flex-direction:column;padding:1px 0 0 5.500px}
 .row{display:flex;flex:none;align-items:center}
 .tree{width:482px;height:197px;border:2px solid #b4b4b4;border-width:2px 1px;background:#fff}
 .tr{display:flex;height:26px;align-items:center}.sw{display:block;flex:none}
 .pre{width:88px;height:89px;background:#b7c6f1;border:1.500px solid #fff;margin-left:207px;margin-top:-1px}
 .sep{flex:none;width:975px;height:3px;border-top:1.500px solid #a5a5a5;background:#fff;margin-top:9px}
 .sol{width:47px;height:23px;background:#646464}
 pen-menu{left:156px;top:550px}
 .grip{position:absolute;left:1px;top:610px;width:3px;height:25px;background:radial-gradient(#b0b0b0 1px,transparent 1.200px) 0 0/3px 5px}`,
  `<div class="t"><q-icon n="logo" w="23" h="22"></q-icon><q-text f="seg" w="362" style="margin-left:7px">Propiedades de la capa - BARRIOS | Simbología</q-text>
   <svg width="15" height="15"><path d="M0 0l15 15M15 0L0 15" stroke="#111" stroke-width="1.800"/></svg></div>
  <div class="m"><side-bar></side-bar><div class="p">
   <div class="row" style="padding-top:3px"><q-box style="width:975px;height:35px;padding:2px 11px 0;"><q-icon n="single" w="19" h="20"></q-icon><q-text w="94" style="margin-left:5px">Símbolo único</q-text><q-arrow style="margin-left:auto"></q-arrow></q-box></div>
   <div class="row" style="margin-top:10px">
    <div class="tree"><div class="tr" style="padding-left:10px"><q-arrow></q-arrow><i class="sw" style="width:23px;height:21px;background:#b7c6f1;margin-left:13px"></i><q-text f="seg" s="16.500" b w="61" style="margin:0 0 0 10px">Relleno</q-text></div>
    <div class="tr" style="background:#efefef;padding-left:63px"><i class="sw" style="width:23px;height:23px;background:#82aee9"></i><q-text f="seg" s="16.500" w="119" style="margin-left:10px">Relleno sencillo</q-text></div></div>
    <div class="pre"></div></div>
   <div class="row" style="gap:9.500px;margin-top:10px">${[['add'], ['minus', 1], ['lock'], ['dup'], ['up', 1], ['down', 1]].map(([n, o]) => `<q-box mid ${o ? 'off' : ''} style="width:40px;height:34px"><q-icon n="${n}" w="21" h="${n === 'up' || n === 'down' ? 17 : 21}"></q-icon></q-box>`).join('')}</div>
   <div class="sep"></div>
   <div class="row" style="margin-top:11px;padding-left:1px"><q-text w="169">Tipo de capa del símbolo</q-text><q-box style="width:788px;height:32px;padding:2px 11px 0 5px;margin-left:1px"><q-text w="105">Relleno sencillo</q-text><q-arrow style="margin-left:auto"></q-arrow></q-box></div>
   <prop-row label="Color de relleno" w="109" style="margin-top:13px"><color-pick style="--c:#b7c6f1"></color-pick></prop-row>
   <prop-row label="Estilo de relleno" w="109"><q-box style="width:743px;height:34px;padding:0 10px 0 6px"><i class="sol"></i><q-text w="41" style="margin:2px 0 0 4px">Sólido</q-text><q-arrow style="margin-left:auto"></q-arrow></q-box></prop-row>
   <prop-row label="Color de marca" w="105"><color-pick style="--c:#fff"></color-pick></prop-row>
   <prop-row label="Anchura de marca" w="127"><q-box field style="width:561px;height:29px;padding-left:5px"><q-text w="67">0,260000</q-text>
     <svg width="19" height="14" style="margin-left:auto;margin-right:16px"><path d="M6 0h13v14H6L0 7z" fill="#8e8e8e"/><path d="M8 3l7 8M15 3l-7 8" stroke="#eee" stroke-width="2"/></svg><q-spin style="margin-left:0"></q-spin></q-box>
     <q-box style="width:173px;height:33px;margin-left:9px;padding:0 10px 0 5px"><q-text w="61">Milímetro</q-text><q-arrow style="margin-left:auto"></q-arrow></q-box></prop-row>
   <prop-row label="Estilo de marca" w="105"></prop-row>
   <prop-row label="Estilo de ángulos" w="117"></prop-row>
   <prop-row bare label="Desplazamiento" w="109" style="margin-top:18px"></prop-row>
   <div class="row" style="margin-top:auto;height:34px;padding-left:2px"><q-check on></q-check><q-text w="87" style="margin-left:7px">Activar capa</q-text><q-icon n="dd" w="34" h="25" style="margin-left:22px"></q-icon>
     <q-check style="margin-left:58px"></q-check><q-text w="121" style="margin-left:6px">Efectos de dibujo</q-text><q-box off mid style="width:34px;height:33px;margin-left:19px"><q-icon n="fx" w="21" h="23"></q-icon></q-box></div>
   <div class="row" style="height:30px;margin-top:32px;padding-left:7px"><svg width="12" height="18"><path d="M0 0l11 9-11 9z" fill="#333"/></svg><q-text b w="207" s="16.500" f="seg" style="margin-left:12px">Representación de capas</q-text></div>
   <div class="row" style="margin:8px 0 3px;gap:9.500px"><q-box style="width:116px;height:31px;padding:0 6px 0 29px"><q-text w="37">Estilo</q-text><q-arrow style="margin-left:auto"></q-arrow></q-box><span style="width:346px"></span>
     ${[['Aceptar', 54, 'def'], ['Cancelar', 62, ''], ['Aplicar', 46, ''], ['Ayuda', 45, '']].map(([t, w, d]) => `<q-box mid ${d} style="width:116px;height:31px"><q-text w="${w}">${t}</q-text></q-box>`).join('')}</div>
   <i class="grip"></i><pen-menu></pen-menu>
  </div></div>`);

define('qgis-window', `:host{display:flex;flex-direction:column;position:relative;width:2800px;height:1518px;background:#efefef;overflow:hidden}
 .b{display:flex;flex:1;min-height:0;gap:0}layer-dialog{left:109px;top:44px}map-canvas{margin-left:9px}`,
  `<title-bar></title-bar><menu-bar></menu-bar>
  <tool-bar><q-grip></q-grip><q-icon n="doc" w="23" h="23" style="margin-left:11px"></q-icon><q-icon n="folder" w="24" h="20" style="margin-left:12px"></q-icon><q-icon n="save" w="24" h="22" style="margin-left:14px"></q-icon><q-icon n="tbox" w="28" h="22" style="margin-left:1193px"></q-icon><q-arrow style="margin:6px 0 0 -2px"></q-arrow></tool-bar>
  <tool-bar style="height:46px"><q-grip></q-grip><q-icon n="layers" w="25" h="23" style="margin-left:10px"></q-icon><q-icon n="pack" w="25" h="23" style="margin-left:11px"></q-icon><q-icon n="vec" w="25" h="23" style="margin-left:12px"></q-icon><span style="width:1196px"></span>
  ${['d0', 'd1', 'd2', 'd2', 'd2', 'd2', 'd2', 'd3', 'd4', 'd5', 'd6', 'd6', 'd7', 'd8', 'd9'].map(n => `<q-icon n="${n}" w="24" h="22" style="margin-right:12.400px"></q-icon>`).join('')}<q-arrow style="margin-left:-2px;opacity:.6"></q-arrow></tool-bar>
  <div class="b"><tool-strip></tool-strip><dock-column></dock-column><map-canvas></map-canvas></div>
  <status-bar></status-bar><layer-dialog></layer-dialog>`);

/* Annotation layer over the window */
define('call-outs', `:host{display:block;position:absolute;left:0;top:0;width:3509px;height:2481px;color:#222f60}svg{position:absolute;left:0;top:0}q-text{position:absolute}`,
  `<svg width="3509" height="2481" fill="none" stroke="#2b3865" stroke-width="4.500"><rect x="677" y="563" width="813" height="65"/>
  <path d="M1306 339V542M1290 526l16 18 16-18M2686 806.500H1510.500V921M1494 904l16.500 18 16.500-18M2684 1477H1467.500V1182M1451 1200l16.500-19 16.500 19"/></svg>
  <q-text f="note" s="48" w="260" style="left:1305px;top:251px">Single style</q-text>
  <q-text f="note" s="48" w="61" style="left:2735px;top:770px">fill</q-text>
  <q-text f="note" s="48" w="197" style="left:2735px;top:1443px">line type</q-text>`);
define('qgis-sheet', ':host{display:block;position:relative;width:3509px;height:2481px;padding:480px 0 0 354px;box-sizing:border-box;background:#fff;overflow:hidden;box-shadow:inset 0 0 0 4px #fb5a55}',
  '<qgis-window></qgis-window><call-outs></call-outs>');
</script>
</body>
</html>
